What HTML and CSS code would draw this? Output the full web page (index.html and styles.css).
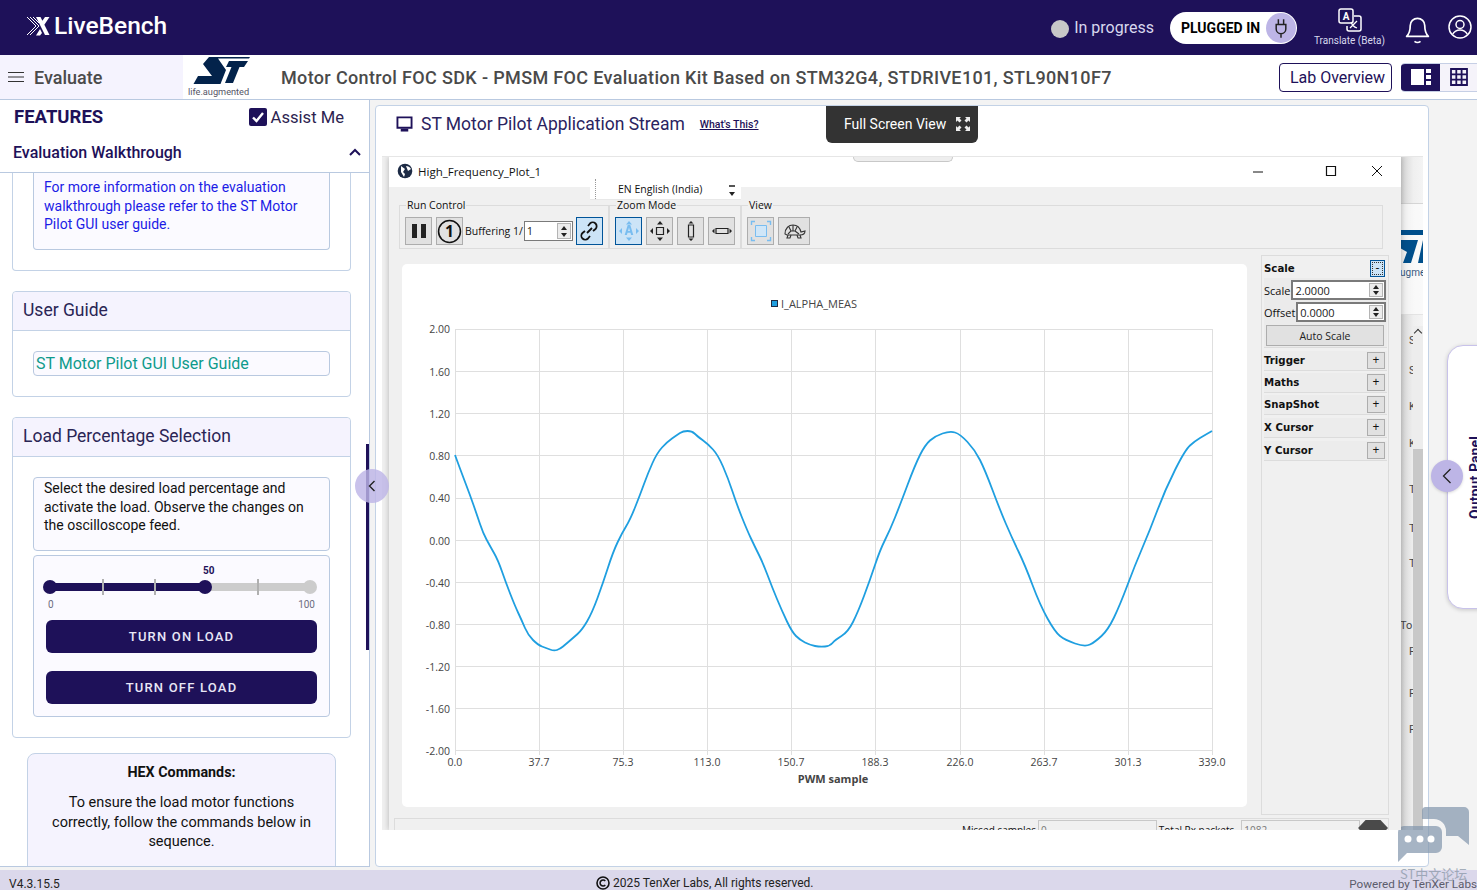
FILE: index.html
```html
<!DOCTYPE html>
<html lang="en">
<head>
<meta charset="utf-8">
<title>LiveBench</title>
<link rel="stylesheet" href="styles.css">
</head>
<body>
<div class="app">
  <header class="topbar">
    <div class="brand">
      <svg class="brand-x" viewBox="0 0 24 20" width="24" height="20"><g fill="none" stroke="#fff"><path d="M1 1l9 9-9 9M4 1l9 9-9 9M7 1l6 6" stroke-width="1"/></g><path d="M10 1h4.500l9 18h-4.500z M19 1h4.500l-6 9-2.300-3.500z M14 13l2 4-2 2.500h-4z" fill="#fff"/></svg>
      <span class="brand-name">LiveBench</span>
    </div>
    <div class="top-right">
      <span class="dot"></span><span class="progress">In progress</span>
      <div class="pill"><b>PLUGGED IN</b><span class="pill-icon"><svg viewBox="0 0 16 24" width="14" height="22"><path d="M5 2v6M11 2v6M2.500 8h11v5a5.500 5.500 0 0 1-11 0zM8 18.500V23" fill="none" stroke="#222" stroke-width="1.700"/></svg></span></div>
      <div class="translate">
        <svg viewBox="0 0 24 24" width="24" height="24"><rect x="1" y="1" width="14" height="14" rx="2" fill="#1e1159" stroke="#fff" stroke-width="1.500"/><text x="8" y="12" class="tr-a">A</text><path d="M16 8h5a2 2 0 0 1 2 2v11a2 2 0 0 1-2 2H11a2 2 0 0 1-2-2v-3" fill="none" stroke="#fff" stroke-width="1.500"/><path d="M12 20l7-7M13 14c1 3 3 5 6 6" fill="none" stroke="#fff" stroke-width="1.300"/></svg>
        <span>Translate (Beta)</span>
      </div>
      <svg class="bell" viewBox="0 0 24 28" width="29" height="34"><path d="M3 21c2-2 3-4 3-9a6 6 0 0 1 12 0c0 5 1 7 3 9z" fill="none" stroke="#fff" stroke-width="1.400" stroke-linejoin="round"/><path d="M9.500 25c1.500 1.200 3.500 1.200 5 0" fill="none" stroke="#fff" stroke-width="1.400"/></svg>
      <svg class="user" viewBox="0 0 24 24" width="24" height="24"><circle cx="12" cy="12" r="11" fill="none" stroke="#fff" stroke-width="1.500"/><circle cx="12" cy="9.500" r="4" fill="none" stroke="#fff" stroke-width="1.500"/><path d="M4.500 19.500c2-3.500 4.500-4.500 7.500-4.500s5.500 1 7.500 4.500" fill="none" stroke="#fff" stroke-width="1.500"/></svg>
    </div>
  </header>

  <div class="subbar">
    <div class="evaluate">
      <svg viewBox="0 0 16 12" width="16" height="12"><path d="M0 1.500h16M0 6h16M0 10.500h16" stroke="#333" stroke-width="1.200"/></svg>
      <span>Evaluate</span>
    </div>
    <div class="st-logo">
      <svg viewBox="0 0 60 29" width="60" height="29"><path d="M17 1H58L57 2.500H26L34 14 28.500 28H1.500L6 20H20L11 8z" fill="#03234b"/><path d="M37 6H56L52 12H47.500L41 28H33L39.500 12H34z" fill="#03234b" transform="translate(0 -1)"/></svg>
      <span>life.augmented</span>
    </div>
    <h1 class="lab-title">Motor Control FOC SDK - PMSM FOC Evaluation Kit Based on STM32G4, STDRIVE101, STL90N10F7</h1>
    <button class="overview">Lab Overview</button>
    <div class="toggle">
      <span class="seg seg-on"><svg viewBox="0 0 20 16" width="20" height="16"><path d="M0 0h13v16H0z" fill="#fff"/><path d="M15 0h5v4h-5zM15 6h5v4h-5zM15 12h5v4h-5z" fill="#fff"/></svg></span>
      <span class="seg"><svg viewBox="0 0 18 18" width="18" height="18"><path d="M1 1h16v16H1zM1 6.300h16M1 11.600h16M6.300 1v16M11.600 1v16" fill="none" stroke="#1e1159" stroke-width="1.800"/></svg></span>
    </div>
  </div>

  <div class="workspace">
    <aside class="sidebar">
      <div class="feat-head">
        <strong>FEATURES</strong>
        <label class="assist"><span class="check"><svg viewBox="0 0 18 18" width="18" height="18"><path d="M4 9.500l3.500 3.500L14 5" fill="none" stroke="#fff" stroke-width="2.400"/></svg></span>Assist Me</label>
      </div>
      <div class="walk-head">
        <span>Evaluation Walkthrough</span>
        <svg viewBox="0 0 12 8" width="12" height="8"><path d="M1 7l5-5 5 5" fill="none" stroke="#1e1159" stroke-width="2"/></svg>
      </div>
      <div class="scroll">
        <section class="card card-cut">
          <div class="note note-cut link-blue">For more information on the evaluation walkthrough please refer to the ST Motor Pilot GUI user guide.</div>
        </section>
        <section class="card">
          <h2 class="card-head">User Guide</h2>
          <div class="card-body guide-body"><a class="guide">ST Motor Pilot GUI User Guide</a></div>
        </section>
        <section class="card">
          <h2 class="card-head">Load Percentage Selection</h2>
          <div class="card-body load-body">
            <div class="note desc">Select the desired load percentage and activate the load. Observe the changes on the oscilloscope feed.</div>
            <div class="note control">
              <div class="slider">
                <span class="slider-val">50</span>
                <div class="track">
                  <div class="track-fill"></div>
                  <span class="tick t1"></span><span class="tick t2"></span><span class="tick t3"></span>
                  <span class="thumb th0"></span><span class="thumb th50"></span><span class="thumb th100"></span>
                </div>
                <div class="slider-ends"><span>0</span><span>100</span></div>
              </div>
              <button class="load-btn">TURN ON LOAD</button>
              <button class="load-btn">TURN OFF LOAD</button>
            </div>
          </div>
        </section>
        <section class="hex">
          <h3>HEX Commands:</h3>
          <p>To ensure the load motor functions correctly, follow the commands below in sequence.</p>
        </section>
      </div>
      <span class="rail"></span>
      <span class="collapse"><svg viewBox="0 0 8 12" width="8" height="12"><path d="M6.500 1L1.500 6l5 5" fill="none" stroke="#222" stroke-width="1.400"/></svg></span>
    </aside>

    <main class="panel">
      <div class="stream-head">
        <svg viewBox="0 0 18 17" width="17" height="16"><path d="M1.500 1.500h15v11h-15z" fill="none" stroke="#1e1159" stroke-width="2"/><path d="M5 15h8" stroke="#1e1159" stroke-width="3"/></svg>
        <h2>ST Motor Pilot Application Stream</h2>
        <a class="whats">What's This?</a>
        <button class="fullscreen">Full Screen View
          <svg viewBox="0 0 14 14" width="14" height="14"><path d="M0 0h5L3.500 1.500 5.500 3.500 3.500 5.500 1.500 3.500 0 5zM14 0v5L12.500 3.500 10.500 5.500 8.500 3.500 10.500 1.500 9 0zM0 14V9l1.500 1.500 2-2 2 2-2 2L5 14zM14 14H9l1.500-1.500-2-2 2-2 2 2L14 9z" fill="#eee"/></svg>
        </button>
      </div>

      <div class="desktop">
        <div class="tab-behind"></div>
        <div class="win-behind">
          <svg class="bg-logo" viewBox="0 0 24 36" width="24" height="36"><path d="M1 0H24V5H1z" fill="#004f8b"/><path d="M1 10H19L12 33H4L8 22 1 18zM24 10V33H19z" fill="#004f8b"/></svg>
          <span class="bg-ugme">ugme</span>
          <span class="bg-frag f1">S</span><span class="bg-frag f2">S</span><span class="bg-frag f3">K</span><span class="bg-frag f4">K</span><span class="bg-frag f5">T</span><span class="bg-frag f6">T</span><span class="bg-frag f7">T</span><span class="bg-frag f8">To</span><span class="bg-frag f9">F</span><span class="bg-frag f10">F</span><span class="bg-frag f11">F</span>
          <div class="bg-scroll"><span class="bg-up"></span><span class="bg-thumb"></span></div>
        </div>

        <div class="window">
          <div class="win-title">
            <svg viewBox="0 0 16 16" width="16" height="16"><circle cx="8" cy="8" r="7.300" fill="#1d2b45"/><path d="M4 3l4 3-2 3 2 2-1 3-3-5zM9 3c2 0 4 1 5 3l-3 2z" fill="#fff"/></svg>
            <span class="win-name">High_Frequency_Plot_1</span>
            <svg class="win-ctl" viewBox="0 0 134 12" width="134" height="12"><path d="M0 7h10" stroke="#111"/><path d="M73.500 1.500h9v9h-9z" fill="none" stroke="#111" stroke-width="1.200"/><path d="M119 1l10 10M129 1l-10 10" stroke="#111"/></svg>
          </div>

          <div class="toolbar">
            <fieldset class="group g-run">
              <legend>Run Control</legend>
              <span class="tbtn"><svg viewBox="0 0 16 16" width="16" height="16"><path d="M1 1h5v14H1zM10 1h5v14h-5z" fill="#222"/></svg></span>
              <span class="tbtn"><svg viewBox="0 0 24 24" width="25" height="25"><circle cx="12" cy="12" r="10.500" fill="none" stroke="#111" stroke-width="1.500"/><text x="12" y="17" class="one">1</text></svg></span>
              <span class="buffering">Buffering 1/</span>
              <span class="spin spin-buf"><span class="spin-val">1</span><span class="spin-arrows"><i class="up"></i><i class="dn"></i></span></span>
              <span class="tbtn active"><svg viewBox="0 0 20 20" width="20" height="20"><g fill="none" stroke="#111" stroke-width="1.800"><path d="M8 12l5-5"/><path d="M9 5l2-2.500a3.500 3.500 0 0 1 5.500 5.500L14 10"/><path d="M11 15l-2 2.500A3.500 3.500 0 0 1 3.500 12L6 10"/></g></svg></span>
            </fieldset>
            <fieldset class="group g-zoom">
              <legend>Zoom Mode</legend>
              <span class="tbtn active"><svg viewBox="0 0 22 22" width="22" height="22"><g fill="#79bdf0"><path d="M11 1l3 3.500H8zM11 21l-3-3.500h6zM1 11l3-3v6zM21 11l-3 3V8z"/><path d="M9.700 5h2.600l3 10h-2.200l-.6-2.300H9.500L8.900 15H6.700zM10 11h2l-1-3.500z"/></g></svg></span>
              <span class="tbtn"><svg viewBox="0 0 22 22" width="22" height="22"><path d="M7.500 7.500h7v7h-7z" fill="#ddd" stroke="#222" stroke-width="1.200"/><path d="M11 1l3 3.500H8zM11 21l-3-3.500h6zM1 11l3-3v6zM21 11l-3 3V8z" fill="#222"/></svg></span>
              <span class="tbtn"><svg viewBox="0 0 22 22" width="22" height="22"><path d="M8.500 5h5v12h-5z" fill="none" stroke="#222" stroke-width="1.200"/><path d="M11 1l2.500 2.500h-5zM11 21l-2.500-2.500h5z" fill="#222"/></svg></span>
              <span class="tbtn"><svg viewBox="0 0 22 22" width="22" height="22"><path d="M5 8.500h12v5H5z" fill="none" stroke="#222" stroke-width="1.200"/><path d="M1 11l2.500-2.500v5zM21 11l-2.500 2.500v-5z" fill="#222"/></svg></span>
            </fieldset>
            <fieldset class="group g-view">
              <legend>View</legend>
              <span class="tbtn"><svg viewBox="0 0 22 22" width="22" height="22"><path d="M5.500 5.500h11v11h-11z" fill="#cfe6f8" stroke="#79bdf0"/><path d="M1.500 5V1.500H5M17 1.500h3.500V5M20.500 17v3.500H17M5 20.500H1.500V17" fill="none" stroke="#79bdf0" stroke-width="1.400"/></svg></span>
              <span class="tbtn wide"><svg viewBox="0 0 24 18" width="24" height="18"><g fill="none" stroke="#333" stroke-width="1.100"><path d="M3 12c0-6 4-9 8-9s7 3 8 7l4-1c0 3-2 4-5 4H5z"/><path d="M7 5l2 4-3 3M11 3v6M15 5l-2 4 4 3M9 9h4"/><path d="M6 13l-1 3h3l1-3M15 13l1 3h3l-1-3"/></g></svg></span>
            </fieldset>
          </div>

          <div class="win-body">
            <div class="plot">
              <svg class="chart" viewBox="402 264 845 543" width="845" height="543">
                <g class="grid">
                  <path d="M455 329.500H1213M455 371.500H1213M455 413.500H1213M455 455.500H1213M455 498.500H1213M455 540.500H1213M455 582.500H1213M455 624.500H1213M455 666.500H1213M455 708.500H1213M455 750.500H1213"/>
                  <path d="M455.500 329V755M539.500 329V755M623.500 329V755M707.500 329V755M791.500 329V755M875.500 329V755M960.500 329V755M1044.500 329V755M1128.500 329V755M1212.500 329V755"/>
                </g>
                <path class="wave" d="M455 455Q462 474 466 484.500Q470 495 473.500 505Q477 515 480 524Q483 533 486.500 539.500Q490 546 494 553Q498 560 502 571.500Q506 583 510.500 594.500Q515 606 518.500 613.500Q522 621 525 628Q528 635 533 640Q538 645 542 646.500Q546 648 550 649.500Q554 651 557 650Q560 649 563 646.500Q566 644 569.500 641Q573 638 577.500 634Q582 630 587 621.500Q592 613 597.500 598Q603 583 608 567.500Q613 552 617.500 542.500Q622 533 626 526.500Q630 520 635 507.500Q640 495 644 484Q648 473 652.500 463Q657 453 662 447.500Q667 442 672 438.500Q677 435 680 433Q683 431 687.500 431Q692 431 694.500 433.500Q697 436 702.500 440Q708 444 713 449.500Q718 455 723 466.500Q728 478 732.500 491.500Q737 505 742 517.500Q747 530 751 538.500Q755 547 759 555Q763 563 767.500 575Q772 587 777 599Q782 611 787 621.500Q792 632 796 636Q800 640 805 642.500Q810 645 815 646Q820 647 825 646.500Q830 646 832.500 643Q835 640 841.500 636Q848 632 853 622Q858 612 864 596Q870 580 875 565Q880 550 885 540Q890 530 895 517.500Q900 505 907.500 485Q915 465 920 455Q925 445 930 440.500Q935 436 942.500 433.500Q950 431 955 432.500Q960 434 967.500 442Q975 450 980 460Q985 470 992.500 490Q1000 510 1006 524Q1012 538 1018.500 551.500Q1025 565 1032.500 585Q1040 605 1047.500 618.500Q1055 632 1060 636Q1065 640 1075 643.500Q1085 647 1090 644.500Q1095 642 1101.500 636Q1108 630 1114 617.500Q1120 605 1127.500 585Q1135 565 1142.500 547.500Q1150 530 1157.500 510Q1165 490 1175 470Q1185 450 1190 445.500Q1195 441 1200 438Q1205 435 1212 431"/>
                <rect class="legend-box" x="771.500" y="300.500" width="6" height="6"/>
                <text class="lbl legend-text" x="781" y="308">I_ALPHA_MEAS</text>
                <g class="lbl lbl-y">
                  <text x="450" y="333">2.00</text><text x="450" y="376">1.60</text><text x="450" y="418">1.20</text><text x="450" y="460">0.80</text><text x="450" y="502">0.40</text><text x="450" y="545">0.00</text><text x="450" y="587">-0.40</text><text x="450" y="629">-0.80</text><text x="450" y="671">-1.20</text><text x="450" y="713">-1.60</text><text x="450" y="755">-2.00</text>
                </g>
                <g class="lbl lbl-x">
                  <text x="455" y="766">0.0</text><text x="539" y="766">37.7</text><text x="623" y="766">75.3</text><text x="707" y="766">113.0</text><text x="791" y="766">150.7</text><text x="875" y="766">188.3</text><text x="960" y="766">226.0</text><text x="1044" y="766">263.7</text><text x="1128" y="766">301.3</text><text x="1212" y="766">339.0</text>
                </g>
                <text class="axis-name" x="833" y="783">PWM sample</text>
              </svg>
            </div>
            <div class="side">
              <div class="acc-open">
                <div class="acc-row acc-first"><b>Scale</b><span class="acc-btn minus">-</span></div>
                <div class="field"><span>Scale</span><span class="spin spin-side"><span class="spin-val">2.0000</span><span class="spin-arrows"><i class="up"></i><i class="dn"></i></span></span></div>
                <div class="field"><span>Offset</span><span class="spin spin-side"><span class="spin-val">0.0000</span><span class="spin-arrows"><i class="up"></i><i class="dn"></i></span></span></div>
                <button class="auto">Auto Scale</button>
              </div>
              <div class="acc-row"><b>Trigger</b><span class="acc-btn">+</span></div>
              <div class="acc-row"><b>Maths</b><span class="acc-btn">+</span></div>
              <div class="acc-row"><b>SnapShot</b><span class="acc-btn">+</span></div>
              <div class="acc-row"><b>X Cursor</b><span class="acc-btn">+</span></div>
              <div class="acc-row"><b>Y Cursor</b><span class="acc-btn">+</span></div>
            </div>
          </div>
          <div class="status">
            <span class="st-label">Missed samples</span><span class="st-box">0</span>
            <span class="st-label">Total Rx packets</span><span class="st-box st-total">1082</span>
            <span class="st-hex"></span>
          </div>

          <div class="lang">
            <span class="lang-name">EN English (India)</span>
            <span class="lang-arrows"></span>
          </div>
        </div>
      </div>
    </main>

    <div class="output-rail">
      <div class="output"><span>Output Panel</span></div>
      <span class="output-btn"><svg viewBox="0 0 10 16" width="10" height="16"><path d="M8.500 1L1.500 8l7 7" fill="none" stroke="#222" stroke-width="1.300"/></svg></span>
    </div>
  </div>

  <footer class="footer">
    <span>V4.3.15.5</span>
    <span class="copy"><svg viewBox="0 0 14 14" width="14" height="14"><circle cx="7" cy="7" r="6" fill="none" stroke="#111" stroke-width="1.600"/><path d="M9.300 5a3 3 0 1 0 0 4" fill="none" stroke="#111" stroke-width="1.500"/></svg>2025 TenXer Labs, All rights reserved.</span>
    <span class="powered">Powered by TenXer Labs</span>
  </footer>

  <div class="forum">
    <svg viewBox="0 0 72 56" width="72" height="56"><path d="M27 0H66a5 5 0 0 1 5 5V38L60 29H48V24A12 12 0 0 0 36 12H24V4a4 4 0 0 1 3-4z" fill="#8497ad" opacity=".72"/><path d="M6 19H38a6 6 0 0 1 6 6V40a6 6 0 0 1-6 6H9L0 55V25a6 6 0 0 1 6-6z" fill="#8497ad" opacity=".72"/><circle cx="10" cy="32" r="3.500" fill="#fff"/><circle cx="22" cy="32" r="3.500" fill="#fff"/><circle cx="33" cy="32" r="3.500" fill="#fff"/></svg>
    <span>ST中文论坛</span>
  </div>
</div>
</body>
</html>
```
FILE: styles.css
```css
* { box-sizing: border-box; }
html, body { margin: 0; height: 100%; overflow: hidden; }
body { font-family: Roboto, "Liberation Sans", sans-serif; color: #111; background: #f3f3f3; }
h1, h2, h3, p { margin: 0; font-weight: 400; }
button { font-family: inherit; cursor: pointer; }

.app { position: relative; width: 1477px; height: 890px; display: flex; flex-direction: column; overflow: hidden; }

/* top bar */
.topbar { height: 55px; flex: none; background: #1e1159; display: flex; align-items: center; justify-content: space-between; padding-left: 26px; }
.brand { display: flex; align-items: center; gap: 4px; margin-bottom: 4px; }
.brand-name { color: #fff; font-size: 24.500px; font-weight: 500; }
.top-right { display: flex; align-items: center; height: 55px; }
.dot { width: 18px; height: 18px; border-radius: 50%; background: #c8c8c8; margin-top: 2px; }
.progress { color: #d8d8ee; font-size: 16px; margin-left: 5px; margin-right: 16px; }
.pill { width: 127px; height: 32px; border-radius: 16px; background: #fff; display: flex; align-items: center; justify-content: space-between; padding: 0 1px 0 11px; }
.pill b { font-size: 14px; font-weight: 700; color: #000; }
.pill-icon { width: 30px; height: 30px; border-radius: 50%; background: #bdb5e6; display: flex; align-items: center; justify-content: center; }
.translate { width: 72px; margin-left: 16.500px; display: flex; flex-direction: column; align-items: center; color: #d8d8ee; font-size: 10px; margin-top: -1px; }
.translate span { white-space: nowrap; margin-top: 3px; }
.tr-a { font-size: 10px; font-weight: 700; fill: #fff; text-anchor: middle; font-family: Roboto, sans-serif; }
.bell { margin-left: 17.500px; }
.user { margin-left: 16px; margin-right: 5px; margin-top: -1px; }

/* sub bar */
.subbar { height: 45px; flex: none; background: #fff; border-bottom: 1px solid #b9c9e0; display: flex; align-items: center; }
.evaluate { width: 183px; height: 44px; background: #f5f3fe; display: flex; align-items: center; gap: 10px; padding-left: 8px; font-size: 18px; font-weight: 500; color: #4a4a4a; flex: none; }
.st-logo { width: 98px; height: 44px; flex: none; padding-left: 5px; display: flex; flex-direction: column; }
.st-logo svg { margin-left: 4px; margin-top: 1px; }
.st-logo span { font-size: 9.200px; color: #556; line-height: 10px; margin-top: 2px; white-space: nowrap; }
.lab-title { font-size: 18px; font-weight: 500; color: #4a4a4a; white-space: nowrap; width: 998px; flex: none; letter-spacing: .35px; }
.overview { width: 113px; height: 29px; background: #fff; border: 1px solid #1e1159; border-radius: 4px; color: #1e1159; font-size: 16px; padding: 0 0 0 4px; flex: none; }
.toggle { margin-left: 9px; width: 76px; height: 29px; flex: none; display: flex; border: 1px solid #c6cfe5; border-left: 0; border-right: 0; border-radius: 4px 0 0 4px; overflow: hidden; }
.seg { flex: 1; background: #f5f3fa; display: flex; align-items: center; justify-content: center; }
.seg-on { background: #1e1159; flex: none; width: 39px; }

/* workspace */
.workspace { flex: 1; min-height: 0; display: flex; position: relative; }

.sidebar { position: relative; width: 370px; flex: none; background: #fff; border-right: 1px solid #b9c9e0; border-bottom: 1px solid #b9c9e0; margin-bottom: 3px; display: flex; flex-direction: column; }
.feat-head { height: 34px; flex: none; display: flex; align-items: center; justify-content: space-between; padding: 0 25px 0 14px; }
.feat-head strong { font-size: 18.500px; font-weight: 700; color: #1e1159; }
.assist { display: flex; align-items: center; gap: 4px; font-size: 16.600px; color: #2c2350; }
.check { width: 18px; height: 18px; background: #1e1159; border-radius: 2px; display: block; }
.check svg { display: block; }
.walk-head { height: 39px; flex: none; border-bottom: 1px solid #b9c9e0; display: flex; align-items: center; justify-content: space-between; padding: 0 8px 2px 13px; font-size: 16px; font-weight: 500; color: #1e1159; }
.scroll { flex: 1; min-height: 0; overflow: hidden; padding: 0 18px 0 12px; }

.card { border: 1px solid #c3d2e6; border-radius: 4px; margin-bottom: 20px; background: #fff; }
.card-cut { border-top: 0; border-radius: 0 0 4px 4px; height: 98px; padding: 0 20px; }
.card-head { height: 39px; background: #f5f3fe; border-bottom: 1px solid #c3d2e6; border-radius: 4px 4px 0 0; font-size: 17.500px; color: #2a2555; padding: 0 10px 2px; display: flex; align-items: center; }
.card-body { padding: 20px 20px 0; }
.guide-body { height: 65px; }
.guide { display: block; height: 25px; border: 1px solid #b9c9e0; border-radius: 4px; background: #fbfaff; color: #0e9a8c; font-size: 16px; line-height: 23px; padding-left: 2px; }
.load-body { padding-bottom: 20px; }

.note { border: 1px solid #b9c9e0; border-radius: 4px; background: #fbfaff; }
.note-cut { border-top: 0; border-radius: 0 0 4px 4px; height: 77px; padding: 5px 10px; font-size: 14px; line-height: 18.500px; }
.link-blue { color: #1c1ce6; }
.desc { height: 74px; padding: 1px 10px; font-size: 14px; line-height: 18.500px; color: #111; }
.control { height: 162px; margin-top: 4px; padding: 0 12px; }

.slider { position: relative; height: 64px; }
.slider-val { position: absolute; left: 157px; top: 9px; font-size: 10px; font-weight: 700; color: #1e1159; }
.track { position: absolute; left: 4px; top: 27px; width: 260px; height: 8px; background: #ccc; border-radius: 4px; }
.track-fill { width: 155px; height: 8px; background: #1e1159; border-radius: 4px 0 0 4px; }
.tick { position: absolute; top: -4px; width: 2px; height: 16px; background: #b0b0b0; }
.t1 { left: 52px; }
.t2 { left: 104px; }
.t3 { left: 207px; }
.thumb { position: absolute; top: -3px; width: 14px; height: 14px; border-radius: 50%; background: #1e1159; }
.th0 { left: -7px; }
.th50 { left: 148px; }
.th100 { left: 253px; background: #ccc; }
.slider-ends { position: absolute; left: 2px; right: 2px; top: 43px; display: flex; justify-content: space-between; font-size: 10px; color: #6d6d80; }
.load-btn { display: block; width: 271px; height: 33px; border: 0; border-radius: 6px; background: #1e1159; color: #e8e6f6; font-size: 13px; font-weight: 500; letter-spacing: 1.200px; margin-bottom: 18px; }

.hex { margin: -5px 0 0 15px; width: 309px; height: 140px; border: 1px solid #c3d2e6; border-radius: 8px 8px 0 0; background: #f5f3fe; text-align: center; padding: 9px 21px; font-size: 14.500px; line-height: 19.500px; color: #111; }
.hex h3 { font-size: 14.300px; font-weight: 700; margin-bottom: 11px; line-height: 19px; }

.rail { position: absolute; left: 366px; top: 344px; width: 3px; height: 206px; background: #1e1159; }
.collapse { position: absolute; left: 355px; top: 369px; width: 34px; height: 34px; border-radius: 50%; background: rgba(189, 181, 230, .82); display: flex; align-items: center; justify-content: center; z-index: 5; }

/* main panel */
.panel { margin: 5px 0 3px 5px; width: 1054px; flex: none; border: 1px solid #c3d2e6; border-radius: 4px; background: #fff; display: flex; flex-direction: column; }
.stream-head { position: relative; height: 50px; flex: none; display: flex; align-items: center; padding: 0 0 14px 20px; }
.stream-head h2 { font-size: 17.500px; color: #2a2360; margin-left: 8px; }
.whats { font-size: 10.500px; font-weight: 500; color: #1e1159; text-decoration: underline; margin-left: 15px; }
.fullscreen { position: absolute; left: 450px; top: 0; width: 152px; height: 37px; background: #333; color: #fff; border: 0; border-radius: 0 0 6px 6px; font-size: 14px; display: flex; align-items: center; padding: 0 0 2px 18px; gap: 10px; white-space: nowrap; }

.desktop { position: relative; margin-left: 6px; width: 1041px; height: 674px; overflow: hidden; background: #f0f0f0; border-top: 1px solid #e6e6e6; }
.tab-behind { position: absolute; left: 471px; top: 0; width: 100px; height: 5px; background: #eee; border: 1px solid #c8c8c8; border-top: 0; border-radius: 0 0 8px 8px; z-index: 3; }

.win-behind { position: absolute; left: 1017px; top: 0; width: 24px; height: 100%; background: linear-gradient(90deg, #d0d0d0 0, #efefef 60%, #f4f4f4 100%); overflow: hidden; }
.win-behind::before { content: ""; position: absolute; left: 0; right: 0; top: 46px; height: 110px; border-top: 1px solid #c4c4c4; border-bottom: 1px solid #dcdcdc; background: #fff; opacity: .6; }
.bg-logo { position: absolute; left: 0; top: 73px; }
.bg-ugme { position: absolute; left: 1px; top: 110px; font-size: 10px; color: #35587f; }
.bg-frag { position: absolute; left: 10px; font-size: 11px; color: #444; }
.f1 { top: 177px; } .f2 { top: 207px; } .f3 { top: 243px; } .f4 { top: 280px; }
.f5 { top: 326px; } .f6 { top: 365px; } .f7 { top: 400px; } .f8 { top: 462px; left: 1px; } .f9 { top: 488px; } .f10 { top: 530px; } .f11 { top: 566px; }
.bg-scroll { position: absolute; left: 14px; top: 169px; width: 10px; bottom: 0; background: #ededed; }
.bg-up { position: absolute; left: 2px; top: 4px; width: 6px; height: 6px; border-left: 1px solid #333; border-top: 1px solid #333; transform: rotate(45deg); }
.bg-thumb { position: absolute; left: 0; right: 0; top: 123px; bottom: 0; background: #c8c8c8; }

.window { position: absolute; left: 7px; top: 0; width: 1012px; height: 673px; background: #f0f0f0; z-index: 2; box-shadow: 0 0 6px rgba(0, 0, 0, .25); font-family: "Open Sans", "Noto Sans", sans-serif; }
.win-title { height: 30px; background: #fff; display: flex; align-items: center; padding: 0 0 2px 8px; position: relative; }
.win-name { font-size: 11.500px; color: #111; margin-left: 5px; }
.win-ctl { position: absolute; left: 864px; top: 8px; }

.toolbar { height: 65px; display: flex; padding: 12px 0 0 10px; }
.group { margin: 0; padding: 0 0 0 5px; border: 1px solid #dcdcdc; height: 50px; display: flex; align-items: flex-start; gap: 4px; min-width: 0; }
.group legend { font-size: 10.500px; line-height: 12px; padding: 0 1px; margin-left: 1px; color: #111; }
.g-run { width: 210px; }
.g-zoom { width: 132px; padding-left: 5px; }
.g-view { width: 642px; }
.tbtn { width: 27px; height: 28px; margin-top: 6px; background: #e1e1e1; border: 1px solid #adadad; display: flex; align-items: center; justify-content: center; flex: none; }
.tbtn.wide { width: 32px; }
.tbtn.active { background: #cce4f7; border-color: #005499; }
.one { font-size: 15px; font-weight: 700; text-anchor: middle; fill: #111; font-family: "Open Sans", sans-serif; }
.buffering { font-size: 10.500px; margin: 13px -4px 0 -2px; white-space: nowrap; color: #111; }
.spin { display: flex; background: #fff; border: 1px solid #7a7a7a; height: 20px; align-items: stretch; }
.spin-buf { width: 49px; margin-top: 10px; margin-left: 1px; margin-right: -1px; }
.spin-val { flex: 1; font-size: 11px; line-height: 18px; padding-left: 2px; color: #222; }
.spin-arrows { width: 14px; margin: 1px; display: flex; flex-direction: column; background: #ececec; border: 1px solid #b4b4b4; }
.spin-arrows i { flex: 1; display: flex; align-items: center; justify-content: center; }
.spin-arrows i::before { content: ""; border-left: 3.500px solid transparent; border-right: 3.500px solid transparent; }
.up::before { border-bottom: 4px solid #222; }
.dn::before { border-top: 4px solid #222; }

.win-body { height: 569px; display: flex; align-items: flex-start; padding: 12px 0 0 13px; position: relative; }
.plot { width: 845px; height: 543px; background: #fff; border-radius: 5px; flex: none; }
.chart { display: block; }
.grid path { fill: none; stroke: #dfdfdf; stroke-width: 1; }
.wave { fill: none; stroke: #1f9fe0; stroke-width: 1.800; stroke-linejoin: round; }
.legend-box { fill: #1f9fe0; stroke: #1d2b45; stroke-width: 1; }
.lbl { font-size: 10.500px; fill: #444; font-family: "Open Sans", sans-serif; }
.legend-text { font-size: 11px; }
.lbl-y text { text-anchor: end; }
.lbl-x text { text-anchor: middle; }
.axis-name { font-size: 11px; font-weight: 700; fill: #444; text-anchor: middle; font-family: "Open Sans", sans-serif; }

.side { margin: -9px 0 0 14px; width: 128px; height: 560px; border: 1px solid #dcdcdc; padding: 3px 1px 0 2px; font-size: 10.500px; flex: none; }
.acc-open { background: #ebebeb; border-bottom: 1px solid #dcdcdc; padding-bottom: 1px; margin-bottom: 3px; }
.acc-row { height: 20px; background: #ececec; border-bottom: 1px solid #dcdcdc; display: flex; align-items: center; justify-content: space-between; padding-right: 2px; margin-bottom: 2px; }
.acc-row:nth-last-child(2), .acc-row:last-child { margin-top: 3px; }
.acc-row b { font-family: "DejaVu Sans", sans-serif; font-size: 10.200px; color: #111; }
.acc-first { background: #f0f0f0; border: 0; margin: 0 0 2px; height: 19px; }
.acc-btn { width: 18px; height: 17px; background: #e1e1e1; border: 1px solid #adadad; font-size: 12px; line-height: 14px; text-align: center; color: #111; }
.acc-btn.minus { width: 15px; height: 17px; background: #cce4f7; border-color: #005499; outline: 1px dotted #333; outline-offset: -3px; }
.field { display: flex; align-items: center; justify-content: space-between; height: 20px; margin: 0 1px 2px 0; font-size: 11px; color: #111; }
.spin-side { flex: 1; margin-left: 1px; border-width: 2px; border-color: #7a7a7a; }
.field span:first-child { white-space: nowrap; }
.auto { display: block; width: 118px; height: 21px; margin: 3px 0 0 2px; padding: 0; background: #e1e1e1; border: 1px solid #adadad; font-family: "Open Sans", sans-serif; font-size: 10.500px; color: #222; }

.status { position: absolute; left: 5px; right: 12px; top: 661px; height: 20px; border: 1px solid #dcdcdc; display: flex; align-items: flex-start; padding: 1px 0 0 567px; font-size: 10px; gap: 2px; }
.st-label { white-space: nowrap; padding-top: 3px; }
.st-box { width: 119px; height: 18px; background: #f0f0f0; border: 1px solid #c8c8c8; color: #777; padding: 2px 0 0 2px; white-space: nowrap; }
.st-total { margin-left: 5px; }
.st-hex { width: 30px; height: 16px; background: #4a4a4a; clip-path: polygon(25% 0, 75% 0, 100% 50%, 75% 100%, 25% 100%, 0 50%); margin-left: -4px; }

.lang { position: absolute; left: 201px; top: 22px; width: 151px; height: 21px; background: #fff; border-bottom: 1px solid #e8e8e8; display: flex; align-items: center; z-index: 3; font-size: 10.500px; }
.lang::before { content: ""; position: absolute; left: 5px; top: 0; bottom: 0; border-left: 1px dotted #999; }
.lang-name { margin-left: 28px; color: #111; }
.lang-arrows { position: absolute; left: 139px; top: 6px; width: 6px; height: 10px; border-top: 2px solid #555; }
.lang-arrows::after { content: ""; position: absolute; left: 0; top: 5px; border-left: 3px solid transparent; border-right: 3px solid transparent; border-top: 4px solid #222; }

/* output panel */
.output-rail { position: relative; flex: 1; min-width: 0; background: #f3f3f3; }
.output { position: absolute; left: 18px; top: 245px; width: 60px; height: 264px; background: #fff; border: 1px solid #c8c2ea; border-radius: 16px 0 0 16px; box-shadow: 0 1px 4px rgba(0, 0, 0, .18); overflow: hidden; display: flex; align-items: center; }
.output span { writing-mode: vertical-rl; transform: rotate(180deg); font-size: 14px; font-weight: 700; color: #1e1159; margin-left: 19px; white-space: nowrap; letter-spacing: .1px; }
.output-btn { position: absolute; left: 2px; top: 360px; width: 32px; height: 32px; border-radius: 50%; background: #bdb5e6; box-shadow: 0 1px 3px rgba(0, 0, 0, .15); display: flex; align-items: center; justify-content: center; }

/* footer */
.footer { height: 20px; flex: none; background: #dbd8eb; display: grid; grid-template-columns: 596px 1fr auto; align-items: end; padding-left: 9px; font-size: 12px; line-height: 12px; color: #222; white-space: nowrap; }
.copy { display: flex; align-items: center; gap: 3px; margin-left: -9px; }
.powered { color: #5c5c6c; font-size: 11.700px; }

.forum { position: absolute; left: 1398px; top: 807px; width: 79px; display: flex; flex-direction: column; }
.forum span { font-family: "Noto Sans CJK SC", Roboto, sans-serif; font-size: 13px; line-height: 14px; color: #8a97a8; opacity: .75; margin: 4px 0 0 2px; white-space: nowrap; }
```
